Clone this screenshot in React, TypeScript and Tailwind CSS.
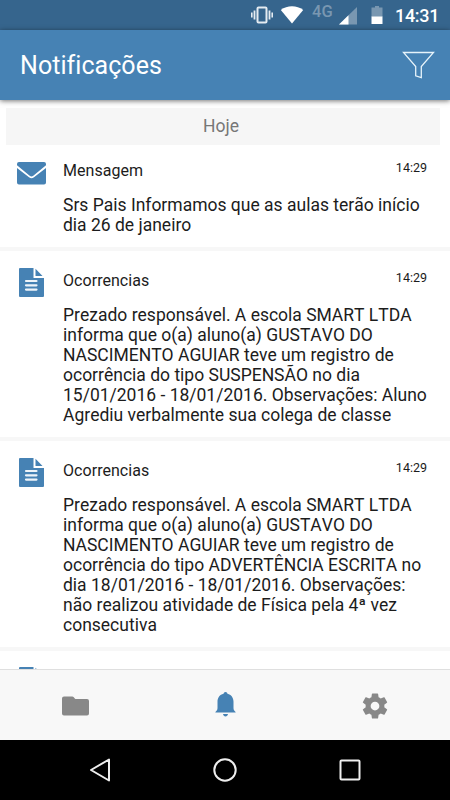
import clsx from "clsx";

type Notification = {
  id: number;
  type: "message" | "occurrence";
  title: string;
  time: string;
  lines: string[];
};

const notifications: Notification[] = [
  {
    id: 1,
    type: "message",
    title: "Mensagem",
    time: "14:29",
    lines: [
      "Srs Pais Informamos que as aulas terão início",
      "dia 26 de janeiro",
    ],
  },
  {
    id: 2,
    type: "occurrence",
    title: "Ocorrencias",
    time: "14:29",
    lines: [
      "Prezado responsável. A escola SMART LTDA",
      "informa que o(a) aluno(a) GUSTAVO DO",
      "NASCIMENTO AGUIAR teve um registro de",
      "ocorrência do tipo SUSPENSÃO no dia",
      "15/01/2016 - 18/01/2016. Observações: Aluno",
      "Agrediu verbalmente sua colega de classe",
    ],
  },
  {
    id: 3,
    type: "occurrence",
    title: "Ocorrencias",
    time: "14:29",
    lines: [
      "Prezado responsável. A escola SMART LTDA",
      "informa que o(a) aluno(a) GUSTAVO DO",
      "NASCIMENTO AGUIAR teve um registro de",
      "ocorrência do tipo ADVERTÊNCIA ESCRITA no",
      "dia 18/01/2016 - 18/01/2016. Observações:",
      "não realizou atividade de Física pela 4ª vez",
      "consecutiva",
    ],
  },
];

const MailIcon = () => (
  <svg width="29" height="23" viewBox="0 0 29 23" fill="#4682b4">
    <path d="M2 0h25a2 2 0 0 1 2 2v1.300L16.300 13.700a2.800 2.800 0 0 1-3.600 0L0 3.300V2a2 2 0 0 1 2-2z" />
    <path d="M0 6l12 9.300a4 4 0 0 0 5 0L29 6v14.500a2 2 0 0 1-2 2H2a2 2 0 0 1-2-2z" />
  </svg>
);

const DocumentIcon = () => (
  <svg width="25" height="29" viewBox="0 0 25 29" fill="#4682b4">
    <path d="M1 0h13.500v10H25v18a1 1 0 0 1-1 1H1a1 1 0 0 1-1-1V1a1 1 0 0 1 1-1z" />
    <path d="M16.500.8v7.200h7z" />
    <path
      d="M7 13h10.500M7 17.300h10.500M7 21.600h10.500"
      stroke="#eef4f9"
      strokeWidth="2.200"
      strokeLinecap="round"
    />
  </svg>
);

const StatusBar = () => (
  <div className="flex h-[30px] shrink-0 items-center bg-[#36658d] pl-[250px] text-white">
    <svg width="24" height="20" viewBox="0 0 24 20" fill="none" stroke="#e4ebf1">
      <rect x="7.500" y="2.500" width="9" height="15" rx="1" strokeWidth="2" />
      <path d="M4.500 5.500v9M19.500 5.500v9" strokeWidth="1.800" />
      <path d="M1.800 7.500v5M22.200 7.500v5" strokeWidth="1.600" />
    </svg>
    <svg className="ml-[6px]" width="24" height="20" viewBox="0 0 24 20" fill="#fff">
      <path d="M.8 5C7.200 0 16.800 0 23.200 5L12 18.500z" />
    </svg>
    <span className="-mt-[6px] ml-[8px] w-[22px] text-[16.500px] leading-none font-medium text-[#7997b1]">
      4G
    </span>
    <svg className="ml-[5px]" width="18" height="20" viewBox="0 0 18 20">
      <path d="M18 2v17.500H0z" fill="#7997b1" />
      <path d="M9.500 10.200v9.300H0z" fill="#fff" />
    </svg>
    <svg className="ml-[14px]" width="12" height="20" viewBox="0 0 12 20">
      <path d="M4 1h4v1.500h3.500V12H.5V2.500H4z" fill="#7997b1" />
      <path d="M.5 11.500h11V19H.5z" fill="#fff" />
    </svg>
    <span className="mt-[2px] ml-[12px] text-[18px] leading-none font-medium tracking-[-0.3px]">
      14:31
    </span>
  </div>
);

const NotificationRow = ({ item }: { item: Notification }) => {
  const isMessage = item.type === "message";

  return (
    <div className="flex border-b-4 border-[#f7f7f7] pt-[17px] pb-[12px] first:pt-[13px]">
      <div
        className={clsx(
          "w-[63px] shrink-0",
          isMessage ? "pt-[4px] pl-[17px]" : "pl-[19px]"
        )}
      >
        {isMessage ? <MailIcon /> : <DocumentIcon />}
      </div>
      <div className="grow">
        <div className="flex justify-between pr-[23px]">
          <h3 className="mt-[3px] text-[16px] leading-5 tracking-[0.05px]">
            {item.title}
          </h3>
          <span className="text-[12.500px] leading-5">{item.time}</span>
        </div>
        <div className="mt-[14px] text-[17.500px] leading-5 whitespace-nowrap [font-kerning:none]">
          {item.lines.map((line) => (
            <p key={line}>{line}</p>
          ))}
        </div>
      </div>
    </div>
  );
};

const TabBar = () => (
  <div className="grid h-[71px] shrink-0 grid-cols-3 place-items-center border-t border-[#dfdfdf] bg-[#f8f8f8]">
    <svg className="mt-[2px]" width="27" height="20" viewBox="0 0 27 20" fill="#888">
      <path d="M2 .5h8.200c.7 0 1.100.3 1.600.8l1 1.100c.4.4.8.6 1.400.6H25a2 2 0 0 1 2 2v12.500a2 2 0 0 1-2 2H2a2 2 0 0 1-2-2v-15a2 2 0 0 1 2-2z" />
    </svg>
    <svg className="-mt-px" width="21" height="25" viewBox="0 0 21 25" fill="#4682b4">
      <path d="M10.500 0a2 2 0 0 1 2 1.700c3.700.9 6 4 6 8v6.400c0 1.900.7 2.800 2.100 3.800v.7H.4v-.7c1.400-1 2.100-1.900 2.100-3.800V9.700c0-4 2.300-7.100 6-8a2 2 0 0 1 2-1.700z" />
      <path d="M8 21.900h5c-.3 1.600-1.200 2.500-2.500 2.500S8.300 23.500 8 21.900z" />
    </svg>
    <svg className="mt-[2px]" width="30" height="30" viewBox="0 0 24 24" fill="#888">
      <path d="M19.430 12.980c.04-.32.070-.64.070-.98s-.03-.66-.07-.98l2.110-1.650c.19-.15.24-.42.12-.64l-2-3.460c-.12-.22-.39-.3-.61-.22l-2.490 1c-.52-.4-1.080-.73-1.690-.98l-.38-2.650C14.460 2.180 14.250 2 14 2h-4c-.25 0-.46.18-.49.42l-.38 2.650c-.61.25-1.170.59-1.690.98l-2.490-1c-.23-.09-.49 0-.61.22l-2 3.460c-.13.22-.07.49.12.64l2.110 1.650c-.04.32-.07.65-.07.98s.03.66.07.98l-2.110 1.650c-.19.15-.24.42-.12.64l2 3.460c.12.22.39.3.61.22l2.490-1c.52.4 1.080.73 1.690.98l.38 2.650c.03.24.24.42.49.42h4c.25 0 .46-.18.49-.42l.38-2.650c.61-.25 1.170-.59 1.690-.98l2.490 1c.23.09.49 0 .61-.22l2-3.460c.12-.22.07-.49-.12-.64l-2.110-1.650zM12 15.500a3.500 3.500 0 1 1 0-7 3.500 3.500 0 0 1 0 7z" />
    </svg>
  </div>
);

const SystemNav = () => (
  <div className="flex h-[60px] shrink-0 items-center justify-between bg-black px-[88px]">
    <svg width="24" height="28" viewBox="0 0 24 28" fill="none" stroke="#eee">
      <path d="M21 3.500v21L3 14z" strokeWidth="2" strokeLinejoin="round" />
    </svg>
    <svg width="24" height="24" viewBox="0 0 24 24" fill="none" stroke="#eee">
      <circle cx="12" cy="12" r="10.700" strokeWidth="2" />
    </svg>
    <svg width="24" height="24" viewBox="0 0 24 24" fill="none" stroke="#eee">
      <rect x="2.500" y="2.500" width="19" height="19" rx="1" strokeWidth="2" />
    </svg>
  </div>
);

export default function App() {
  return (
    <div className="flex h-[800px] w-[450px] flex-col overflow-hidden bg-white font-['Roboto',sans-serif] text-[#1c1c1c]">
      <StatusBar />
      <header className="z-10 flex h-[70px] shrink-0 items-center justify-between bg-[#4682b4] pr-[15px] pl-[20px] shadow-[0_1px_5px_rgba(0,0,0,0.55)]">
        <h1 className="text-[25px] leading-none tracking-[0.05px] text-white">
          Notificações
        </h1>
        <svg width="33" height="28" viewBox="0 0 33 28" fill="none" stroke="#e6f3fa">
          <path d="M1.500 1.500h30L19.300 15.500v11.200l-5.600-1.800v-9.400z" strokeWidth="1.300" />
        </svg>
      </header>

      <main className="grow overflow-hidden pt-[8px]">
        <div className="mr-[10px] ml-[6px] flex h-[37px] items-center justify-center bg-[#f6f6f6] pr-[4px] text-[17.500px] text-[#777]">
          Hoje
        </div>
        <div>
          {notifications.map((item) => (
            <NotificationRow key={item.id} item={item} />
          ))}
        </div>
        <div className="pt-[16px] pl-[19px]">
          <DocumentIcon />
        </div>
      </main>

      <TabBar />
      <SystemNav />
    </div>
  );
}
